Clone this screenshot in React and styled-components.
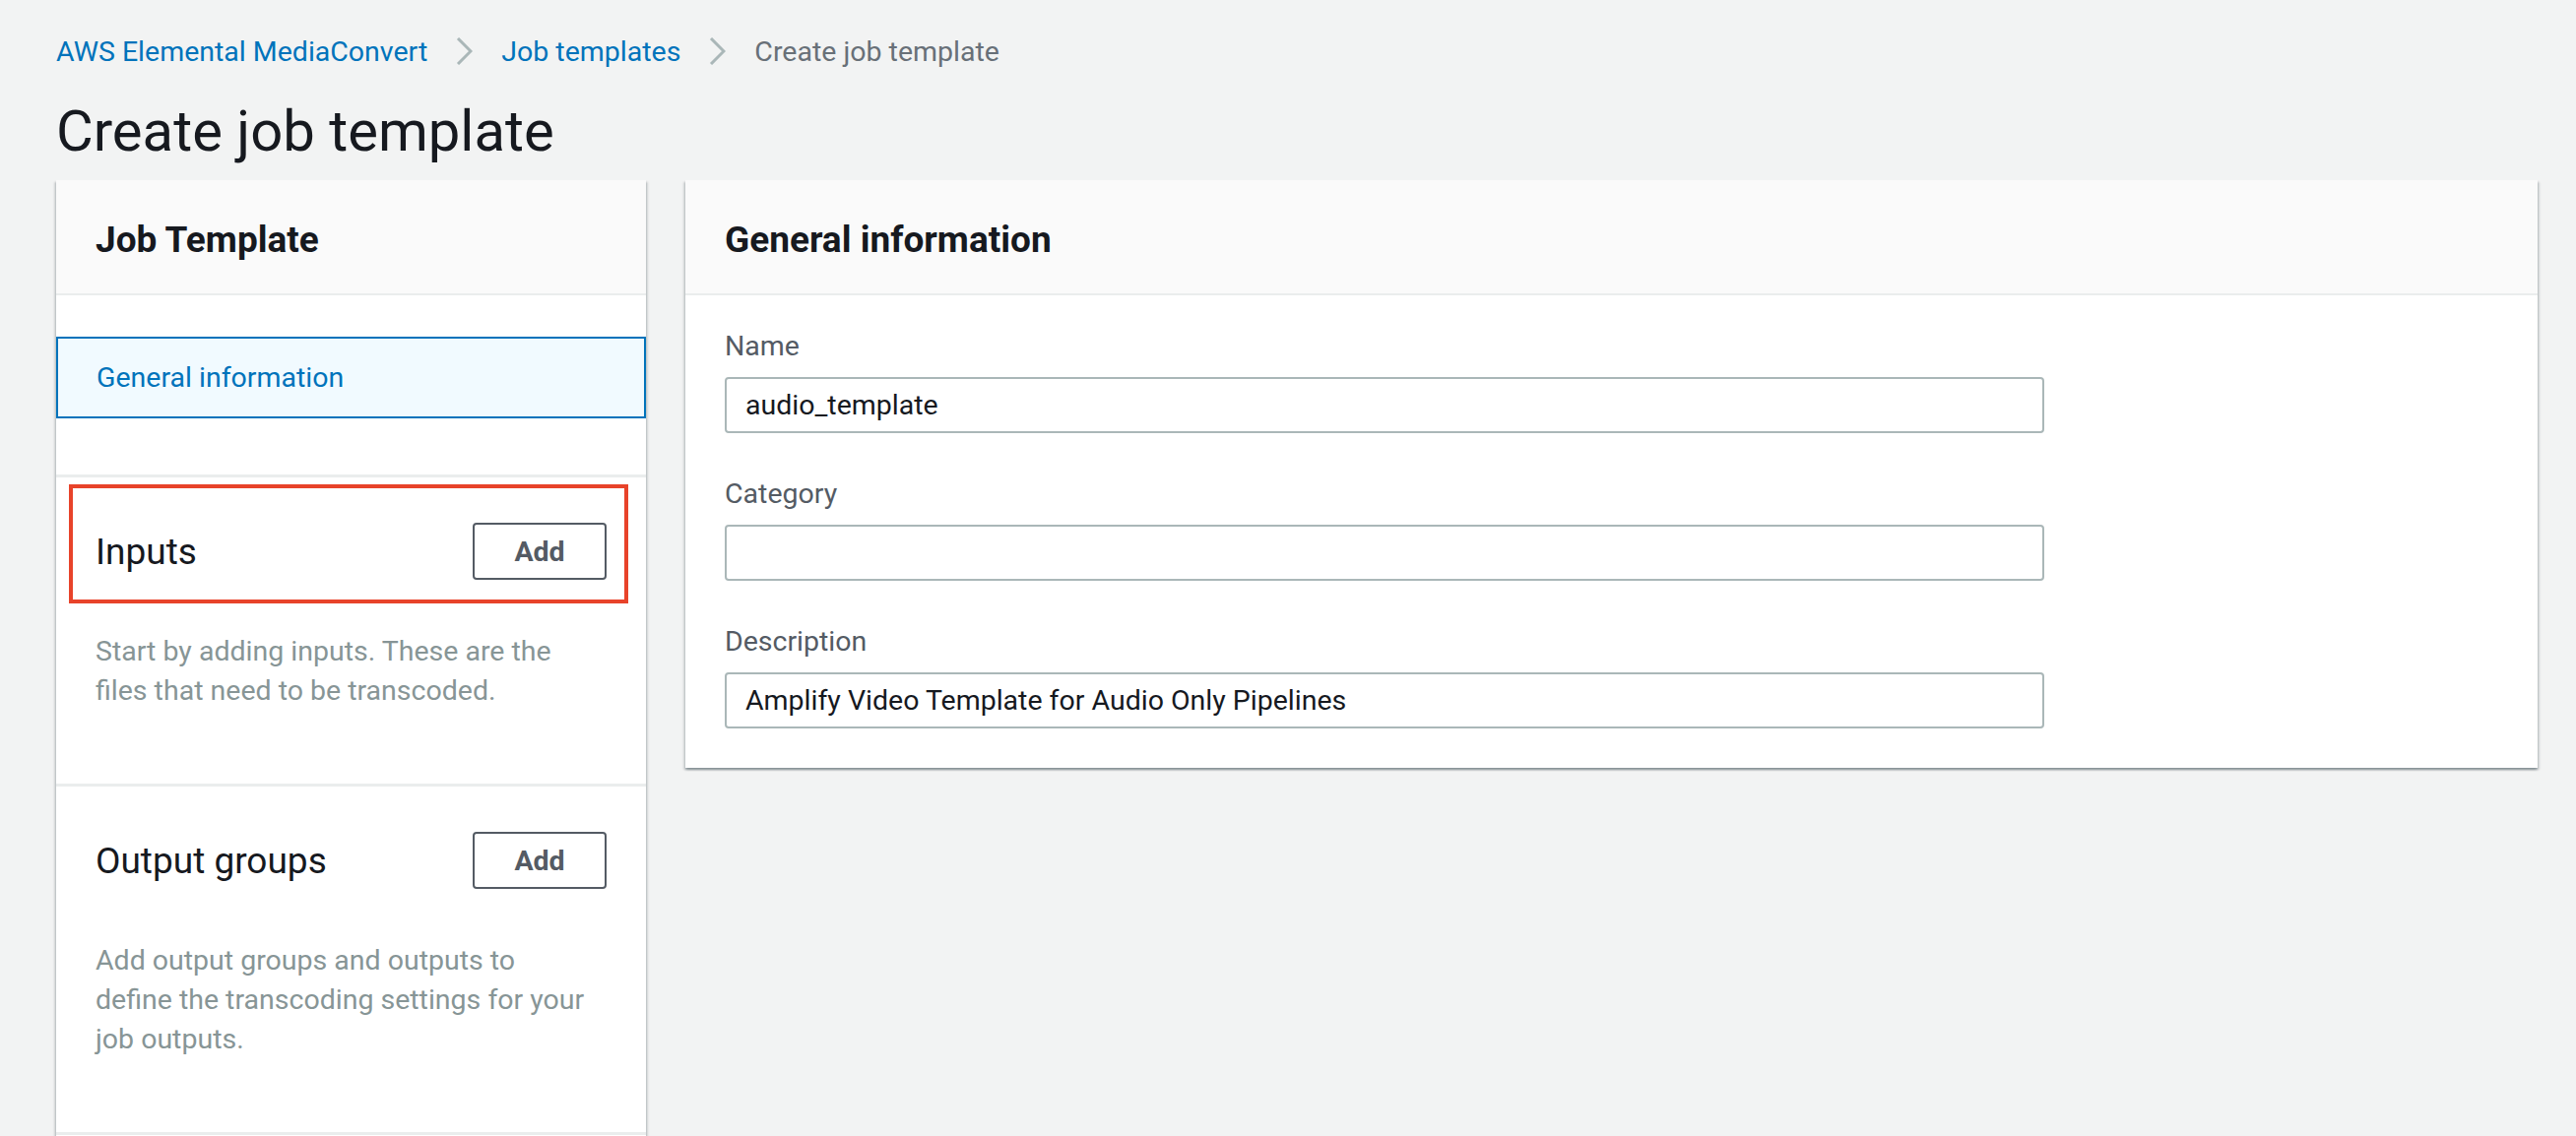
import styled, { createGlobalStyle } from "styled-components";

const GlobalStyle = createGlobalStyle`
  html, body {
    margin: 0;
    padding: 0;
    background-color: #f2f3f3;
    overflow: hidden;
  }
  body {
    font-family: Roboto, "Liberation Sans", sans-serif;
    color: #16191f;
  }
  * {
    box-sizing: border-box;
  }
`;

const Page = styled.div`
  padding: 32px 39px 0 57px;
`;

const Crumbs = styled.nav`
  display: flex;
  align-items: center;
  gap: 29px;
  height: 40px;
  font-size: 28.5px;
`;

const Crumb = styled.span`
  color: ${(p) => (p.current ? "#687078" : "#0073bb")};
  white-space: nowrap;
`;

const Title = styled.h1`
  margin: 27px 0 16px;
  font-size: 58px;
  font-weight: 400;
  line-height: 68px;
  color: #16191f;
`;

const Columns = styled.div`
  display: grid;
  grid-template-columns: 599px 1fr;
  gap: 40px;
  align-items: start;
`;

const Panel = styled.div`
  background-color: #fff;
  box-shadow: 0 2px 2px 0 rgba(0, 28, 36, 0.3), 2px 2px 2px 0 rgba(0, 28, 36, 0.12),
    -2px 2px 2px 0 rgba(0, 28, 36, 0.12);
`;

const PanelHeader = styled.div`
  height: 117px;
  padding: 5px 40px 0;
  display: flex;
  align-items: center;
  background-color: #fafafa;
  border-bottom: 2px solid #eaeded;
  font-size: 37px;
  font-weight: 700;
  color: #16191f;
`;

const NavBody = styled.div`
  padding: 42px 0 57px;
`;

const NavItem = styled.div`
  height: 83px;
  padding-left: 39px;
  display: flex;
  align-items: center;
  border: 2px solid #0073bb;
  background-color: #f1faff;
  color: #0073bb;
  font-size: 28.5px;
`;

const Section = styled.div`
  border-top: 3px solid #eaeded;
  padding: 46px 40px 74px;
  min-height: ${(p) => p.minHeight || "auto"};
`;

const SectionHead = styled.div`
  position: relative;
  height: 58px;
  display: flex;
  align-items: center;
  justify-content: space-between;

  ${(p) =>
    p.highlight &&
    `
    &::after {
      content: "";
      position: absolute;
      left: -27px;
      right: -22px;
      top: -39px;
      bottom: -24px;
      border: 4px solid #e8432a;
      pointer-events: none;
    }
  `}
`;

const SectionTitle = styled.div`
  font-size: 37px;
  color: #16191f;
`;

const AddButton = styled.button`
  width: 136px;
  height: 58px;
  border: 2px solid #545b64;
  border-radius: 4px;
  background-color: #fff;
  color: #545b64;
  font-family: inherit;
  font-size: 28.5px;
  font-weight: 700;
`;

const SectionText = styled.p`
  margin: 53px 0 0;
  font-size: 28.5px;
  line-height: 40px;
  color: #879596;
  white-space: nowrap;
`;

const FormBody = styled.div`
  padding: 32px 40px 40px;
  display: flex;
  flex-direction: column;
  gap: 42px;
`;

const Field = styled.div`
  display: flex;
  flex-direction: column;
  gap: 11px;
`;

const Label = styled.label`
  font-size: 28.5px;
  line-height: 40px;
  color: #545b64;
`;

const TextInput = styled.input`
  width: 1340px;
  height: 57px;
  padding: 0 19px;
  border: 2px solid #aab7b8;
  border-radius: 4px;
  background-color: #fff;
  font-family: inherit;
  font-size: 28.5px;
  color: #16191f;
  outline: none;
`;

const Chevron = () => (
  <svg width="17" height="28" viewBox="0 0 17 28">
    <polyline points="2,1 15,14 2,27" fill="none" stroke="#aab7b8" strokeWidth="3" />
  </svg>
);

const fields = [
  { label: "Name", value: "audio_template" },
  { label: "Category", value: "" },
  { label: "Description", value: "Amplify Video Template for Audio Only Pipelines" },
];

export default function App() {
  return (
    <>
      <GlobalStyle />
      <Page>
        <Crumbs>
          <Crumb>AWS Elemental MediaConvert</Crumb>
          <Chevron />
          <Crumb>Job templates</Crumb>
          <Chevron />
          <Crumb current>Create job template</Crumb>
        </Crumbs>
        <Title>Create job template</Title>

        <Columns>
          <Panel>
            <PanelHeader>Job Template</PanelHeader>
            <NavBody>
              <NavItem>General information</NavItem>
            </NavBody>
            <Section>
              <SectionHead highlight>
                <SectionTitle>Inputs</SectionTitle>
                <AddButton>Add</AddButton>
              </SectionHead>
              <SectionText>
                Start by adding inputs. These are the
                <br />
                files that need to be transcoded.
              </SectionText>
            </Section>
            <Section>
              <SectionHead>
                <SectionTitle>Output groups</SectionTitle>
                <AddButton>Add</AddButton>
              </SectionHead>
              <SectionText>
                Add output groups and outputs to
                <br />
                define the transcoding settings for your
                <br />
                job outputs.
              </SectionText>
            </Section>
            <Section minHeight="300px" />
          </Panel>

          <Panel>
            <PanelHeader>General information</PanelHeader>
            <FormBody>
              {fields.map((f) => (
                <Field key={f.label}>
                  <Label>{f.label}</Label>
                  <TextInput readOnly value={f.value} />
                </Field>
              ))}
            </FormBody>
          </Panel>
        </Columns>
      </Page>
    </>
  );
}
